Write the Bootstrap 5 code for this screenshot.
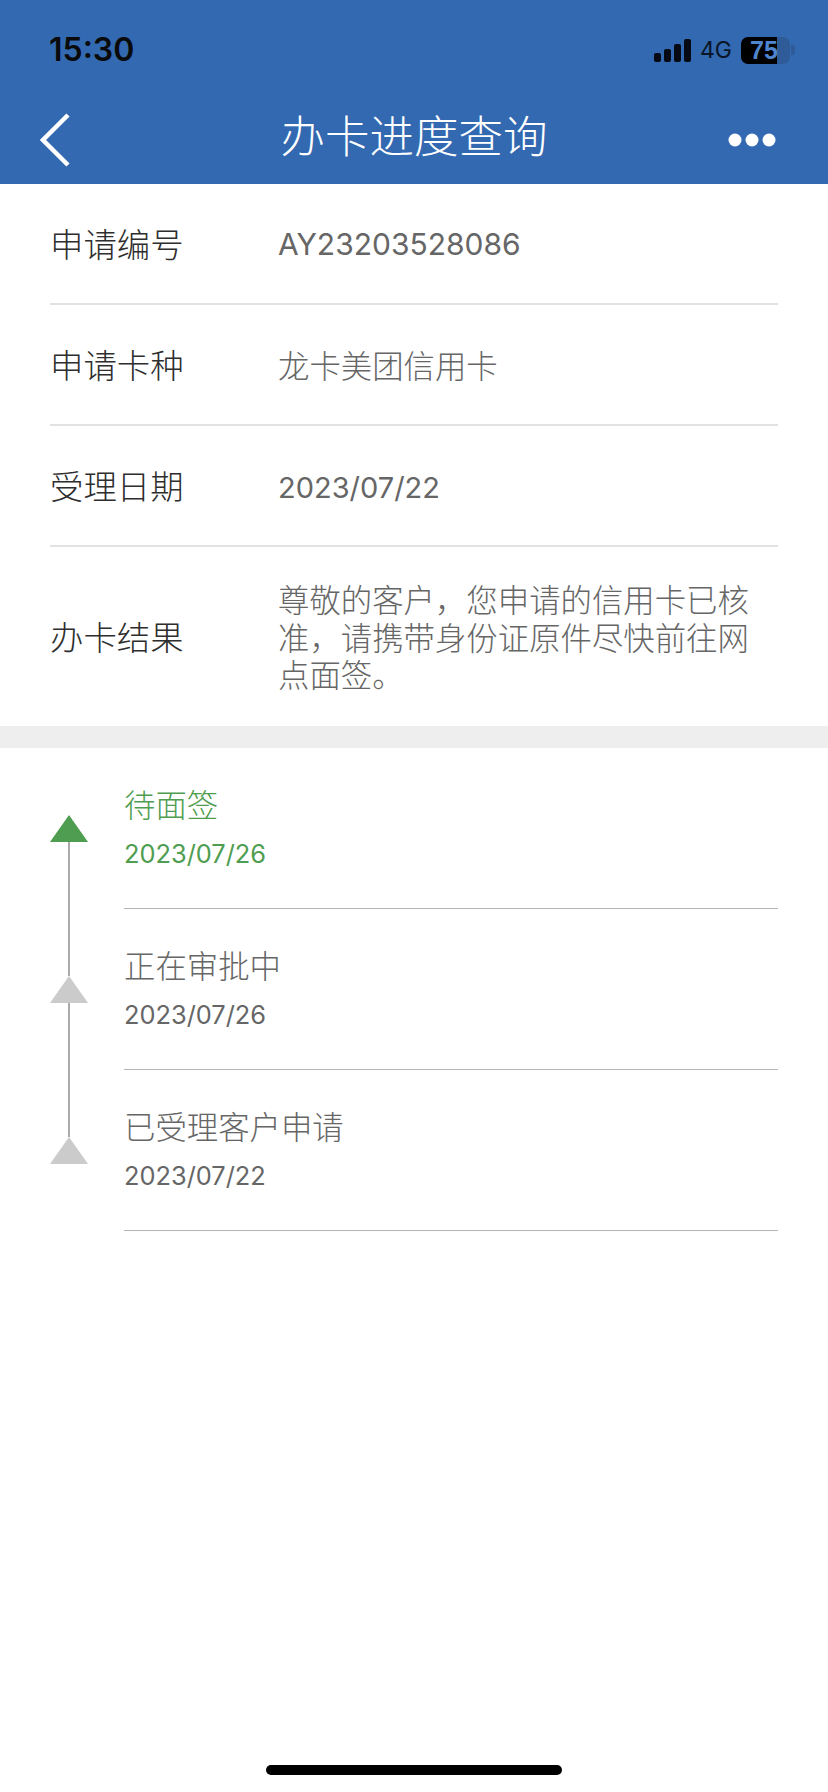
<!DOCTYPE html>
<html lang="zh-CN">

<head>
    <meta charset="UTF-8">
    <meta name="viewport" content="width=device-width, initial-scale=1.0">
    <title>办卡进度查询</title>
    <link href="https://cdn.jsdelivr.net/npm/bootstrap@5.3.0/dist/css/bootstrap.min.css" rel="stylesheet">
    <style>
        body {
            background-color: #fff;
            font-family: "Inter", "Noto Sans CJK SC", sans-serif;
            height: 1792px;
        }

        .app-head {
            background-color: #3269b1;
            height: 184px;
        }

        .status-bar {
            height: 86px;
            padding: 14px 33px 0 49px;
        }

        .status-time {
            font-family: "Inter", sans-serif;
            font-size: 32px;
            font-weight: 600;
            color: #0a0a0a;
        }

        .status-net {
            font-family: "Inter", sans-serif;
            font-size: 23px;
            color: #0a1526;
            margin: 0 9px 0 9px;
        }

        .battery {
            width: 49px;
            height: 27px;
            border-radius: 7px;
            background: linear-gradient(to right, #000 0 36px, #2f5c98 36px);
            color: #4f85cf;
            font-family: "Liberation Sans", sans-serif;
            font-size: 25px;
            font-weight: 700;
            line-height: 27px;
            padding-left: 9px;
        }

        .battery-nub {
            width: 4px;
            height: 10px;
            margin-left: 1px;
            background-color: #2f5c98;
            border-radius: 0 3px 3px 0;
        }

        .title-bar {
            height: 98px;
            padding: 10px 52px 0 40px;
        }

        .title-side {
            flex: 1 1 0;
        }

        .title-left {
            margin-right: 12px;
        }

        .title-text {
            font-family: "Noto Sans CJK SC", sans-serif;
            font-size: 44.5px;
            font-weight: 300;
            color: #fff;
            line-height: 1;
            margin-bottom: 12px;
        }

        .info-wrap {
            padding: 0 50px;
        }

        .info-row {
            height: 121px;
            border-bottom: 2px solid #e2e2e2;
        }

        .info-row.last-row {
            height: 179px;
            border-bottom: 0;
        }

        .info-label {
            width: 228px;
            flex: none;
            font-size: 33.4px;
            font-family: "Noto Sans CJK SC", sans-serif;
            font-weight: 300;
            color: #2e2e2e;
        }

        .info-value {
            font-size: 31.4px;
            font-family: "Noto Sans CJK SC", sans-serif;
            font-weight: 300;
            line-height: 37.5px;
            color: #666;
        }

        .info-num {
            font-family: "Inter", sans-serif;
            font-weight: 400;
            font-size: 30px;
            padding-top: 2px;
        }

        .info-date {
            font-size: 29px;
            padding-top: 4px;
        }

        .gray-band {
            height: 22px;
            background-color: #eee;
        }

        .steps {
            padding: 67px 50px 0;
        }

        .rail {
            width: 38px;
            margin-right: 36px;
            flex: none;
        }

        .rail svg {
            display: block;
        }

        .rail-line {
            width: 2px;
            height: 134px;
            background-color: #aaa;
        }

        .step-list {
            margin-top: -67px;
        }

        .step-item {
            height: 161px;
            padding-top: 35px;
            border-bottom: 1.5px solid #b4b4b4;
        }

        .step-name {
            font-family: "Noto Sans CJK SC", sans-serif;
            font-weight: 300;
            font-size: 31.4px;
            line-height: 42px;
            color: #666;
        }

        .step-date {
            font-size: 25.4px;
            line-height: 36px;
            margin-top: 11px;
            color: #666;
        }

        .step-on .step-name,
        .step-on .step-date {
            color: #4f9d50;
        }

        .home-bar {
            width: 296px;
            height: 10px;
            border-radius: 5px;
            background-color: #000;
            margin-bottom: 17px;
        }
    </style>
</head>

<body class="d-flex flex-column">
    <header class="app-head">
        <div class="status-bar d-flex align-items-center justify-content-between">
            <span class="status-time">15:30</span>
            <div class="d-flex align-items-center">
                <svg width="37" height="23" viewBox="0 0 37 23">
                    <rect x="0" y="14" width="7" height="9" rx="2" fill="#050a14" />
                    <rect x="10" y="10" width="7" height="13" rx="2" fill="#050a14" />
                    <rect x="20" y="5" width="7" height="18" rx="2" fill="#050a14" />
                    <rect x="30" y="0" width="7" height="23" rx="2" fill="#050a14" />
                </svg>
                <span class="status-net">4G</span>
                <div class="battery">75</div>
                <div class="battery-nub"></div>
            </div>
        </div>
        <div class="title-bar d-flex align-items-center">
            <div class="title-side title-left">
                <svg class="d-block" width="30" height="54" viewBox="0 0 30 54">
                    <path d="M28 2 L3 27 L28 52" fill="none" stroke="#fff" stroke-width="4.5" />
                </svg>
            </div>
            <span class="title-text">办卡进度查询</span>
            <div class="title-side d-flex justify-content-end">
                <svg class="d-block" width="48" height="14" viewBox="0 0 48 14">
                    <circle cx="7" cy="7" r="6.5" fill="#fff" />
                    <circle cx="24" cy="7" r="6.5" fill="#fff" />
                    <circle cx="41" cy="7" r="6.5" fill="#fff" />
                </svg>
            </div>
        </div>
    </header>

    <section class="info-wrap">
        <div class="info-row d-flex align-items-center">
            <div class="info-label">申请编号</div>
            <div class="info-value info-num">AY23203528086</div>
        </div>
        <div class="info-row d-flex align-items-center">
            <div class="info-label">申请卡种</div>
            <div class="info-value">龙卡美团信用卡</div>
        </div>
        <div class="info-row d-flex align-items-center">
            <div class="info-label">受理日期</div>
            <div class="info-value info-num info-date">2023/07/22</div>
        </div>
        <div class="info-row last-row d-flex align-items-center">
            <div class="info-label">办卡结果</div>
            <div class="info-value">尊敬的客户，您申请的信用卡已核准，请携带身份证原件尽快前往网点面签。</div>
        </div>
    </section>

    <div class="gray-band"></div>

    <section class="steps d-flex">
        <div class="rail d-flex flex-column align-items-center">
            <svg width="38" height="27" viewBox="0 0 38 27"><path d="M19 0 L38 27 H0 Z" fill="#4f9d50" /></svg>
            <div class="rail-line"></div>
            <svg width="38" height="27" viewBox="0 0 38 27"><path d="M19 0 L38 27 H0 Z" fill="#cbcbcb" /></svg>
            <div class="rail-line"></div>
            <svg width="38" height="27" viewBox="0 0 38 27"><path d="M19 0 L38 27 H0 Z" fill="#cbcbcb" /></svg>
        </div>
        <div class="step-list flex-grow-1">
            <div class="step-item step-on">
                <div class="step-name">待面签</div>
                <div class="step-date">2023/07/26</div>
            </div>
            <div class="step-item">
                <div class="step-name">正在审批中</div>
                <div class="step-date">2023/07/26</div>
            </div>
            <div class="step-item">
                <div class="step-name">已受理客户申请</div>
                <div class="step-date">2023/07/22</div>
            </div>
        </div>
    </section>

    <div class="home-bar mt-auto mx-auto"></div>

    <script src="https://cdn.jsdelivr.net/npm/bootstrap@5.3.0/dist/js/bootstrap.bundle.min.js"></script>
</body>

</html>
